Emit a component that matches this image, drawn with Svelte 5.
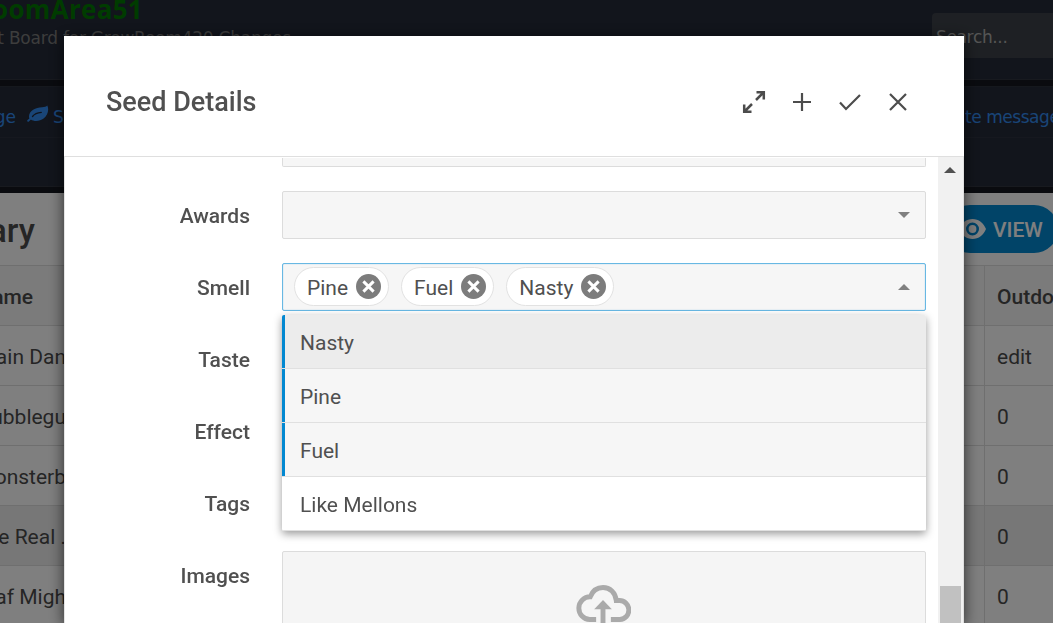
<script>
  const rows = [
    { name: 'ain Dan', outdoor: 'edit' },
    { name: 'ubblegu', outdoor: '0' },
    { name: 'onsterb', outdoor: '0' },
    { name: 'e Real .', outdoor: '0', active: true },
    { name: 'af Migh', outdoor: '0' }
  ];
  const chips = ['Pine', 'Fuel', 'Nasty'];
  const options = [
    { label: 'Nasty', selected: true, focused: true },
    { label: 'Pine', selected: true },
    { label: 'Fuel', selected: true },
    { label: 'Like Mellons' }
  ];
</script>

<div class="page">
  <header class="masthead">
    <div class="brand">
      <div class="brand-name"><span>oomArea51</span></div>
      <div class="brand-sub"><span>t Board for GrowRoom420 Changes</span></div>
    </div>
    <div class="search">Search...</div>
  </header>
  <nav class="menu">
    <div class="menu-row">
      <div class="menu-left">
        <div class="cut"><span>ge</span></div>
        <svg class="leaf" width="22" height="18" viewBox="0 0 22 18">
          <path d="M20.300.5c-1 1.300-2.700 1.600-5.200 1.700C8.500 2.400 2.300 5.500 2 11.300c0 .9.1 1.500.4 2.100L.5 15.100c-.9.9.4 2.300 1.400 1.400l2-1.900c3 2.200 9 2 12.700-1 3.900-3.200 5.800-8.500 3.700-13.100z" fill="#328bef" />
          <path d="M5.500 11.500c2-2.700 4.800-3.800 8.800-4.100" fill="none" stroke="#202637" stroke-width="1.300" stroke-linecap="round" />
        </svg>
        <span>S</span>
      </div>
      <div class="menu-right">te message</div>
    </div>
  </nav>
  <section class="summary">
    <div class="summary-head">
      <h2><span>ary</span></h2>
      <div class="view">
        <svg width="27" height="20" viewBox="0 0 27 20">
          <path fill-rule="evenodd" fill="#fff" d="M13.500 0C7.400 0 2.200 4.100 0 10c2.200 5.900 7.400 10 13.500 10S24.800 15.900 27 10C24.800 4.100 19.600 0 13.500 0zm0 16.500a6.500 6.500 0 1 1 0-13 6.500 6.500 0 0 1 0 13zm0-2.600a3.900 3.900 0 1 0 0-7.800 3.900 3.900 0 0 0 0 7.800z" />
        </svg>
        <span>VIEW</span>
      </div>
    </div>
    <div class="row head"><div class="name"><span>ame</span></div><div class="outdoor">Outdo</div></div>
    {#each rows as row}
      <div class="row" class:active={row.active}>
        <div class="name"><span>{row.name}</span></div>
        <div class="outdoor">{row.outdoor}</div>
      </div>
    {/each}
  </section>
</div>

<div class="overlay">
  <div class="modal">
    <div class="modal-head">
      <h1>Seed Details</h1>
      <div class="actions">
        <svg width="24" height="24" viewBox="0 0 24 24"><path d="M14 10 21.500 2.500M14.500 2.200h7.300v7.300M10 14 2.500 21.500M2.200 14.500v7.300h7.300" /></svg>
        <svg width="24" height="24" viewBox="0 0 24 24"><path d="M12 3v18M3 12h18" /></svg>
        <svg width="24" height="24" viewBox="0 0 24 24"><path d="m2 12.500 6 6.500L22 5" /></svg>
        <svg width="24" height="24" viewBox="0 0 24 24"><path d="m4 4 16 16M20 4 4 20" /></svg>
      </div>
    </div>
    <div class="modal-body">
      <div class="form">
        <div class="field"><div></div><div class="control tail"></div></div>
        <div class="field">
          <div class="label">Awards</div>
          <div class="control"><i class="caret"></i></div>
        </div>
        <div class="field">
          <div class="label">Smell</div>
          <div class="control open">
            {#each chips as chip}
              <div class="chip">
                <span>{chip}</span>
                <svg width="25" height="25" viewBox="0 0 25 25">
                  <circle cx="12.500" cy="12.500" r="12.500" fill="#7c7c7c" />
                  <path d="m7.400 7.400 10.200 10.200M17.600 7.400 7.400 17.600" stroke="#fff" stroke-width="3" />
                </svg>
              </div>
            {/each}
            <i class="caret up"></i>
            <div class="dropdown">
              {#each options as option}
                <div class="option" class:selected={option.selected} class:focused={option.focused}>{option.label}</div>
              {/each}
            </div>
          </div>
        </div>
        <div class="field"><div class="label">Taste</div><div class="control"></div></div>
        <div class="field"><div class="label">Effect</div><div class="control"></div></div>
        <div class="field"><div class="label">Tags</div><div class="control"></div></div>
        <div class="field">
          <div class="label">Images</div>
          <div class="control upload">
            <svg width="55" height="40" viewBox="0 0 56 40" preserveAspectRatio="none" fill="none" stroke="#aaa" stroke-width="5">
              <path d="M20.500 34.500H14a11.300 11.300 0 0 1 .5-22.700C17 5.500 22 2.500 27.500 2.500c7 0 12.700 5 13.500 13.100h3a9.400 9.400 0 0 1 .7 18.900H35.500" />
              <path d="M27.500 40V22" />
              <path d="M18.500 24.300 27.500 15l9 9.300z" fill="#aaa" stroke="none" />
            </svg>
          </div>
        </div>
      </div>
      <div class="scrollbar"><i class="arrow"></i><i class="thumb"></i></div>
    </div>
  </div>
</div>

<style>
  :global(body) { overflow: hidden; background: #fff; }
  .page, .overlay { box-sizing: border-box; width: 1053px; height: 623px; overflow: hidden; font-family: Roboto, sans-serif; }
  .page { background: #14171f; }
  .page *, .overlay * { box-sizing: border-box; }
  .masthead { height: 80px; background: #242a38; border-bottom: 1px solid #30343e; display: flex; justify-content: space-between; font-family: "DejaVu Sans", sans-serif; }
  .brand-name, .brand-sub, .cut, h2, .name { display: flex; justify-content: flex-end; white-space: nowrap; }
  .brand-name { width: 143px; height: 25px; margin-top: -4px; font: bold 26px/27px "Open Sans", sans-serif; letter-spacing: .3px; color: #007800; }
  .brand-sub { width: 291px; margin-top: 5px; font-size: 17px; line-height: 24px; letter-spacing: -.22px; color: #7a7a7a; }
  .search { width: 121px; height: 45px; margin-top: 13px; padding-left: 4px; border-radius: 4px 0 0 0; background: #3c4148; color: #aaa; font-size: 17px; letter-spacing: -.35px; line-height: 49px; }
  .menu { margin-top: 6px; height: 101px; background: #242a38; border-top: 1px solid #2b303b; border-bottom: 1px solid #30343e; font: 17px/60px "DejaVu Sans", sans-serif; color: #328bef; }
  .menu-row { height: 51px; border-bottom: 1px solid #2c313e; display: flex; justify-content: space-between; }
  .menu-left { display: flex; }
  .cut { width: 16px; }
  .leaf { margin: 18px 4px 0 11px; }
  .menu-right { width: 88px; white-space: nowrap; overflow: hidden; letter-spacing: -.45px; }
  .summary { margin-top: 6px; height: 430px; background: #fff; color: #4b4b4b; }
  .summary-head { height: 73px; display: flex; justify-content: space-between; border-bottom: 1px solid #dedede; }
  h2 { margin: 0; width: 35px; font-size: 33px; font-weight: 500; line-height: 75px; }
  .view { width: 112px; height: 48px; margin-top: 12px; padding: 0 0 0 13px; display: flex; align-items: center; gap: 7px; border-radius: 24px; margin-right: -5px; background: #0288d1; color: #fff; font-size: 21px; font-weight: 500; }
  .view span { padding-top: 1px; }
  .row { height: 60px; display: flex; justify-content: space-between; border-bottom: 1px solid #dedede; font-size: 21px; line-height: 62px; }
  .head { background: #f6f6f6; font-weight: 500; }
  .row.active { background: #efefef; }
  .name { width: 66px; }
  .head .name { width: 33px; }
  .outdoor { width: 69px; padding-left: 12px; border-left: 1px solid #dedede; white-space: nowrap; overflow: hidden; }
  .overlay { position: fixed; left: 0; top: 0; padding: 36px 0 0 64px; background: rgba(0, 0, 0, .5); color: #505050; }
  .modal { width: 900px; height: 587px; background: #fff; box-shadow: 0 3px 14px rgba(0, 0, 0, .65); }
  .modal-head { height: 121px; padding: 0 54px 0 42px; border-bottom: 1px solid #dfdfdf; display: flex; justify-content: space-between; align-items: center; }
  h1 { margin: 12px 0 0; font-size: 27px; font-weight: 500; line-height: 36px; }
  .actions { display: flex; gap: 24px; margin-top: 12px; fill: none; stroke: #4c4c4c; stroke-width: 2.200; }
  .actions svg:first-child { stroke-width: 2.500; }
  .modal-body { height: 466px; display: flex; border-left: 1px solid #e4e4e4; border-right: 1px solid #dedede; overflow: hidden; }
  .form { width: 873px; padding-top: 1px; display: flex; flex-direction: column; gap: 24px; }
  .field { display: grid; grid-template-columns: 185px 644px; column-gap: 32px; flex: none; }
  .label { height: 48px; text-align: right; font-size: 21px; font-weight: 500; line-height: 50px; }
  .control { position: relative; height: 48px; border: 1px solid #dcdcdc; border-radius: 2px; background: #f6f6f6; display: flex; align-items: center; }
  .control.tail { height: 9px; border-top: 0; border-radius: 0 0 2px 2px; }
  .control.open { padding-left: 11px; gap: 12px; border-color: #68b8e3; box-shadow: inset 0 0 1px #68b8e3; }
  .caret { margin: 0 15px 0 auto; border: 6px solid transparent; border-top-color: #808080; border-bottom: 0; }
  .caret.up { border-bottom: 6px solid #808080; border-top: 0; }
  .chip { height: 39px; margin-top: -1px; padding: 0 7px 0 12px; border: 1px solid #e2e2e2; border-radius: 20px; background: #fff; display: flex; align-items: center; gap: 8px; font-size: 21px; }
  .chip span { line-height: 36px; padding-top: 3px; }
  .dropdown { position: absolute; z-index: 2; left: -1px; top: 51px; width: 644px; background: #fff; border-radius: 2px; overflow: hidden; box-shadow: 0 3px 9px rgba(0, 0, 0, .4); }
  .option { position: relative; height: 54px; padding-left: 18px; border-bottom: 1px solid #e0e0e0; font-size: 21px; line-height: 56px; }
  .selected { background: #f6f6f6; }
  .selected::before { content: ""; position: absolute; left: 0; top: 0; width: 3px; height: 53px; background: #0288d1; }
  .focused { background: #ececec; }
  .control.upload { height: 96px; background: #f5f5f5; align-items: flex-start; justify-content: center; padding: 33px 1px 0 0; }
  .scrollbar { width: 25px; background: #f1f1f1; display: flex; flex-direction: column; align-items: center; }
  .arrow { margin: 10px 1px 0 0; border: 6px solid transparent; border-top: 0; border-bottom-color: #505050; }
  .thumb { width: 21px; margin-top: 413px; height: 60px; background: #c1c1c1; flex: none; }
</style>
